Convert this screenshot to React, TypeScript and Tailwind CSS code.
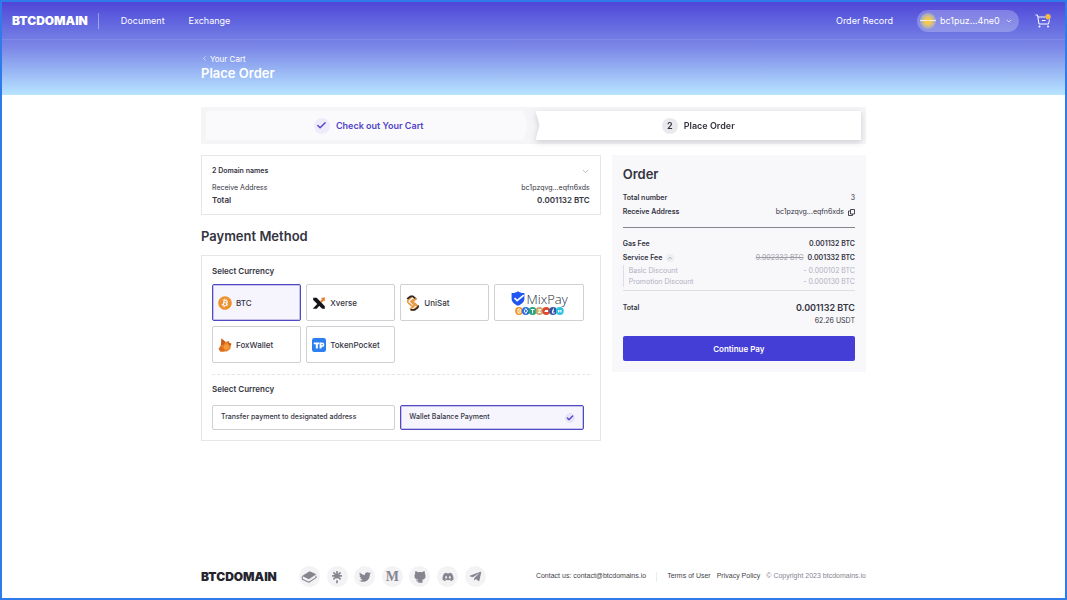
import React, { useState } from "react";
import { FiCheck, FiChevronDown, FiChevronLeft, FiChevronUp } from "react-icons/fi";
import { FaBitcoin, FaDiscord, FaTelegramPlane, FaTwitter } from "react-icons/fa";

const GitbookIcon = () => (
  <svg viewBox="0 0 24 24" className="w-4" fill="currentColor">
    <path d="M1.5 10.5 13 3.500l10 4.200-11.300 7.600z" />
    <path
      d="M2 11v4.500l9.800 4.400 10.700-6.900V10"
      fill="none"
      stroke="currentColor"
      strokeWidth="1.6"
      strokeLinejoin="round"
    />
  </svg>
);

const LinktreeIcon = () => (
  <svg viewBox="0 0 24 24" className="w-3.5" fill="none" stroke="currentColor" strokeWidth="2.8">
    <path d="M12 1.500v13M12 17.500v5M3.500 10h17M5.800 4l12.400 12M18.200 4 5.800 16" />
  </svg>
);

const GithubIcon = () => (
  <svg viewBox="0 0 24 24" className="w-3.5" fill="currentColor">
    <path d="M4 2c2 0 3.600.9 4.700 1.700 2.100-.4 4.500-.4 6.600 0C16.400 2.900 18 2 20 2c.7 1.700.6 3.100.2 4.200 1 1.200 1.400 2.500 1.300 4.300-.2 4-2.400 5.600-5.800 6.100.4.700.6 1.300.6 2.200v3.200H9v-2.200c-2.300.4-3.500-.6-4.200-2.200.9.300 2.200.3 3.700-.1.100-.4.200-.6.500-.9-3.500-.5-6.300-2.100-6.500-6.100-.1-1.800.3-3.100 1.300-4.300C3.400 5.100 3.300 3.700 4 2z" />
  </svg>
);

const XverseIcon = () => (
  <svg viewBox="0 0 24 24" className="w-3.5">
    <path d="M2 3h6l14 14.500V22h-4.500L2 7z" fill="#15151a" />
    <path d="M2 22h6l9-10-3.500-3L2 21z" fill="#15151a" />
    <path d="M14 8.500 17 6l-1.500-2.500L22 2v7l-2-1-3.500 3.500z" fill="#e8813a" />
  </svg>
);

const UnisatIcon = () => (
  <svg viewBox="0 0 24 28" className="h-4" fill="none" strokeWidth="3" strokeLinecap="round">
    <path d="M11 2.500 5 7.500c-3 2.500-2.500 5.200 0 7.300l7.500 6" stroke="#e99a45" />
    <path d="M3 6l5-3.500h4l5 4" stroke="#33261f" />
    <path d="m17.500 7-6 4.500 6.500 5.200c2.200 2 1.800 4.200-.3 6L13 26" stroke="#e99a45" />
    <path d="m13 7.500-4.500 4 7 6.500-7.500 6" stroke="#e99a45" />
    <path d="M21.500 19.500c0 1.500-1 2.500-2 3.300L15 26H9" stroke="#33261f" />
  </svg>
);

const FoxIcon = () => (
  <svg viewBox="0 0 24 24" className="w-3.5">
    <path d="M6 1 13 7l5-2 1.500 3.500L23 10l-2 9-6 4H4l-3-4.500L5 12z" fill="#ea8126" />
    <path d="m6 1 7 6-4 5-4 .500zM18 5l1.500 3.500L23 10l-3 3-3-3z" fill="#c95c1c" />
    <path d="M1 18.500 6 15l6 6-1.500 2H4z" fill="#d96c1e" />
    <path d="m11 12 6-1.500 2 6-5 4-4-3z" fill="#f79c3c" />
  </svg>
);

const TokenPocketIcon = () => (
  <svg viewBox="0 0 24 24" className="w-3.5">
    <rect width="24" height="24" rx="4" fill="#2b7ff0" />
    <path d="M3 7.500h9.500v3.200H10V18H6.500v-7.300H3z" fill="#fff" />
    <path
      fillRule="evenodd"
      d="M13 7.500h4.200a4 4 0 0 1 0 8h-.8V18H13zM16.400 10.200v2.700h.8a1.300 1.300 0 0 0 0-2.700z"
      fill="#fff"
    />
  </svg>
);

const coins = ["#f2932c", "#2a6fe0", "#24a17b", "#c9a766", "#e0492f", "#3057a8", "#2cc3e0"];

const MixPay = () => (
  <span className="flex flex-col items-center">
    <span className="flex items-center gap-0.5">
      <svg viewBox="0 0 24 26" className="w-3.5">
        <path d="M1 3.500C5 4 9 2.800 12 .5c3 2.300 7 3.500 11 3V13c0 6-5 10.200-11 12.500C6 23.200 1 19 1 13z" fill="#1f55f0" />
        <path d="m6 12 4.500 4.500L22 7" fill="none" stroke="#fff" strokeWidth="3" />
      </svg>
      <span className="font-['Open_Sans',sans-serif] text-[13px] leading-4 font-light text-gray-800">
        MixPay
      </span>
    </span>
    <svg viewBox="0 0 49 8" className="h-2 w-[49px]">
      {coins.map((color, i) => (
        <circle key={color} cx={4 + i * 6.8} cy="4" r="3.9" fill={color} />
      ))}
      <g fill="none" stroke="#fff" strokeWidth="1">
        <path d="M3 2v4h1.500a1 1 0 0 0 0-2 1 1 0 0 0 0-2zM10.800 1.500l1.700 2.500-1.700 2.500L9.100 4zM15.800 2.500h3.600M17.600 2.500v4M22.800 3l3-.5-2.500 3.200 3-.5M29.500 4.500h3.500M30 3l1 1 1-1 1 1M38.500 1.500l-1.200 4.500h2.500M37 4.500l2-1M43.500 5.500v-2.500l1.300 1.500L46 3v2.500" />
      </g>
    </svg>
  </span>
);

const CopyIcon = () => (
  <svg viewBox="0 0 14 14" className="w-[7px]" fill="none" stroke="currentColor" strokeWidth="1.8">
    <path d="M5 1h8v9H5z" />
    <path d="M5 4H1v9h8v-3" />
  </svg>
);

const CartIcon = () => (
  <svg viewBox="0 0 32 28" className="w-4" fill="none" stroke="currentColor" strokeWidth="2">
    <path d="M1 2h4l3 18h19l2-9M6 6h15M14 13h7" />
    <circle cx="9" cy="25" r="2" fill="currentColor" stroke="none" />
    <circle cx="26" cy="25" r="2" fill="currentColor" stroke="none" />
    <circle cx="26" cy="5.5" r="5.500" fill="#f3b94c" stroke="none" />
  </svg>
);

const wallets = [
  { name: "BTC", icon: <FaBitcoin size={14} className="text-[#ee932b]" /> },
  { name: "Xverse", icon: <XverseIcon /> },
  { name: "UniSat", icon: <UnisatIcon /> },
  { name: "MixPay", icon: null },
  { name: "FoxWallet", icon: <FoxIcon /> },
  { name: "TokenPocket", icon: <TokenPocketIcon /> },
];

const methods = ["Transfer payment to designated address", "Wallet Balance Payment"];

const socials = [
  { name: "GitBook", icon: <GitbookIcon /> },
  { name: "Linktree", icon: <LinktreeIcon /> },
  { name: "Twitter", icon: <FaTwitter size={12} /> },
  { name: "Medium", icon: <span className="font-['Liberation_Serif',serif] text-sm leading-none font-bold">M</span> },
  { name: "GitHub", icon: <GithubIcon /> },
  { name: "Discord", icon: <FaDiscord size={12} /> },
  { name: "Telegram", icon: <FaTelegramPlane size={13} /> },
];

const selectedBox = "border-[#5149c4] bg-[#f6f5fd] ring-1 ring-inset ring-[#5149c4]/30";
const plainBox = "border-[#cfcfd4] bg-white";

const Header = () => (
  <header className="bg-linear-to-b from-[#5046d8] via-[#7d89e7] to-[#b9e5ff] text-white">
    <div className="flex h-[38px] items-center border-b border-white/10 pr-3.5 pl-2.5 text-[9px]">
      <a href="#" className="text-[12px] font-black">BTCDOMAIN</a>
      <span className="mx-2.5 h-4 w-px bg-white/40" />
      <nav className="flex gap-6 pl-3">
        <a href="#">Document</a>
        <a href="#">Exchange</a>
      </nav>
      <a href="#" className="ml-auto">Order Record</a>
      <button className="ml-6 flex h-[22px] w-[102px] items-center gap-1 rounded-full bg-white/25 pr-1.5 pl-[3px]">
        <span className="flex size-4 items-center rounded-full bg-radial from-[#f8c84a] from-25% to-[#8fa3cf] to-75%">
          <span className="h-px w-full bg-white/80" />
        </span>
        bc1puz...4ne0
        <FiChevronDown size={8} className="ml-auto" />
      </button>
      <button aria-label="Cart" className="ml-4">
        <CartIcon />
      </button>
    </div>
    <div className="mx-auto flex h-[55px] max-w-[665px] flex-col justify-center pb-0.5">
      <a href="#" className="flex items-center gap-0.5 text-[8px] leading-3">
        <FiChevronLeft size={7} />
        Your Cart
      </a>
      <h1 className="text-[13px] leading-4 font-semibold">Place Order</h1>
    </div>
  </header>
);

const Steps = () => (
  <div className="flex bg-[#f5f5f7] px-[5px] py-1 text-[9px] font-semibold">
    <div className="flex h-[29px] flex-1 items-center justify-center gap-1.5 bg-[#fafafc] text-[#5044c8] [clip-path:polygon(0_0,calc(100%-8px)_0,calc(100%-4px)_50%,calc(100%-8px)_100%,0_100%)]">
      <span className="flex size-4 items-center justify-center rounded-full bg-[#eeecfb]">
        <FiCheck size={11} strokeWidth={3} />
      </span>
      Check out Your Cart
    </div>
    <div className="ml-1 flex-1 drop-shadow-[0_2px_3px_rgba(40,40,70,0.2)]">
      <div className="flex h-[29px] items-center justify-center gap-1.5 bg-white text-[#34343f] [clip-path:polygon(0_0,100%_0,100%_100%,0_100%,4px_50%)]">
        <span className="flex size-4 items-center justify-center rounded-full bg-[#e9e9ee]">2</span>
        Place Order
      </div>
    </div>
  </div>
);

const Payment = () => {
  const [wallet, setWallet] = useState("BTC");
  const [method, setMethod] = useState("Wallet Balance Payment");

  return (
    <section>
      <h2 className="mt-3 text-[13px] leading-[18px] font-semibold">Payment Method</h2>
      <div className="mt-2.5 border border-[#e6e6e9] p-2.5">
        <h3 className="text-[8px] leading-2.5 font-semibold">Select Currency</h3>
        <div className="mt-2 grid grid-cols-4 gap-[5px] pr-1.5">
          {wallets.map((item) => (
            <button
              key={item.name}
              onClick={() => setWallet(item.name)}
              className={`flex h-[37px] items-center rounded-xs border text-[8px] font-medium ${
                item.icon ? "gap-1 px-[5px]" : "justify-center"
              } ${wallet === item.name ? selectedBox : plainBox}`}
            >
              {item.icon ? (
                <>
                  <span className="flex w-3.5 shrink-0 justify-center">{item.icon}</span>
                  {item.name}
                </>
              ) : (
                <MixPay />
              )}
            </button>
          ))}
        </div>
        <hr className="mt-[11px] border-dashed border-[#e6e6e9]" />
        <h3 className="mt-2 text-[8px] leading-3 font-semibold">Select Currency</h3>
        <div className="mt-2.5 grid grid-cols-2 gap-[5px] pr-1.5">
          {methods.map((item) => (
            <button
              key={item}
              onClick={() => setMethod(item)}
              className={`flex h-[25px] items-center justify-between rounded-xs border px-2 text-[7px] font-medium ${
                method === item ? selectedBox : plainBox
              }`}
            >
              {item}
              {method === item && (
                <span className="flex size-2.5 items-center justify-center rounded-full bg-[#e6e3fa] text-[#5044c8]">
                  <FiCheck size={8} strokeWidth={4} />
                </span>
              )}
            </button>
          ))}
        </div>
      </div>
    </section>
  );
};

const Order = () => (
  <aside className="bg-[#f8f8fb] px-[11px] pt-2.5 pb-[11px] text-[7px] leading-3.5">
    <h2 className="text-[13px] leading-[18px] font-semibold">Order</h2>
    <div className="mt-2 flex justify-between">
      <span className="font-semibold">Total number</span>
      <span>3</span>
    </div>
    <div className="flex justify-between">
      <span className="font-semibold">Receive Address</span>
      <span className="flex items-center gap-1">
        bc1pzqvg...eqfn6xds
        <button aria-label="Copy address">
          <CopyIcon />
        </button>
      </span>
    </div>
    <hr className="mt-2 border-[#85858d]" />
    <div className="mt-[9px] flex justify-between font-semibold">
      <span>Gas Fee</span>
      <span>0.001132 BTC</span>
    </div>
    <div className="flex justify-between font-semibold">
      <button className="flex items-center gap-1">
        Service Fee
        <span className="rounded-full bg-[#ededf2] p-px text-gray-500">
          <FiChevronUp size={6} />
        </span>
      </button>
      <span>
        <s className="mr-1 font-normal text-[#9c9ca6]">0.002332 BTC</s>
        0.001332 BTC
      </span>
    </div>
    <div className="border-l border-[#dedee5] pl-[5px] leading-[11px] text-[#b0b0bd]">
      <div className="flex justify-between">
        <span>Basic Discount</span>
        <span>- 0.000102 BTC</span>
      </div>
      <div className="flex justify-between">
        <span>Promotion Discount</span>
        <span>- 0.000130 BTC</span>
      </div>
    </div>
    <hr className="mt-[3px] border-[#dedee5]" />
    <div className="mt-2.5 flex items-center justify-between font-semibold">
      <span>Total</span>
      <span className="text-[9px]">0.001132 BTC</span>
    </div>
    <p className="text-right leading-3">62.26 USDT</p>
    <button className="mt-[9px] h-[25px] w-full rounded-xs bg-[#443dd6] text-[8px] font-semibold text-white">
      Continue Pay
    </button>
  </aside>
);

const Footer = () => (
  <footer className="mx-auto mt-auto mb-[11px] flex w-full max-w-[665px] items-center font-['Liberation_Sans',sans-serif] text-[7px] text-[#3f3f48]">
    <a href="#" className="font-['Inter',sans-serif] text-[12px] font-black text-[#25252f]">BTCDOMAIN</a>
    <div className="ml-[22px] flex w-[187px] justify-between text-[#85858f]">
      {socials.map((item) => (
        <a
          key={item.name}
          href="#"
          aria-label={item.name}
          className="flex size-[21px] items-center justify-center rounded-full bg-[#f3f3f6]"
        >
          {item.icon}
        </a>
      ))}
    </div>
    <div className="ml-auto flex items-center gap-1.5">
      <a href="mailto:contact@btcdomains.io">Contact us: contact@btcdomains.io</a>
      <span className="mx-1 h-2.5 w-px bg-[#ececef]" />
      <a href="#">Terms of User</a>
      <a href="#">Privacy Policy</a>
      <span className="text-[#85858f]">© Copyright 2023 btcdomains.io</span>
    </div>
  </footer>
);

const App = () => {
  return (
    <div className="flex min-h-screen flex-col border-2 border-[#2f7bea] bg-white font-['Inter',sans-serif] text-[#34343f]">
      <Header />
      <main className="mx-auto mt-3 mb-8 w-full max-w-[665px]">
        <Steps />
        <div className="mt-[11px] grid grid-cols-[minmax(0,11fr)_minmax(0,7fr)] items-start gap-[11px]">
          <div>
            <section className="border border-[#e6e6e9] px-2.5 py-2 text-[7px] leading-3">
              <button className="flex h-3.5 w-full items-center justify-between font-semibold">
                2 Domain names
                <FiChevronDown size={9} className="text-gray-400" />
              </button>
              <div className="mt-1 flex justify-between">
                <span>Receive Address</span>
                <span>bc1pzqvg...eqfn6xds</span>
              </div>
              <div className="flex justify-between text-[8px] font-semibold">
                <span>Total</span>
                <span>0.001132 BTC</span>
              </div>
            </section>
            <Payment />
          </div>
          <Order />
        </div>
      </main>
      <Footer />
    </div>
  );
};

export default App;
